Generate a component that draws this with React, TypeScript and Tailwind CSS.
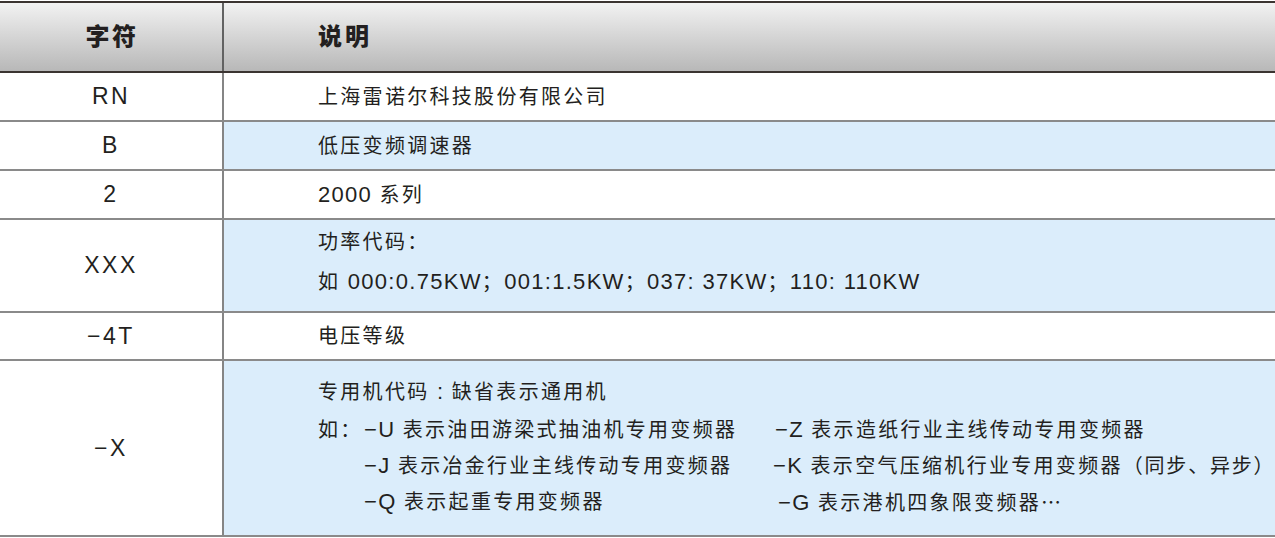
import React from "react";

const FONT = "font-['Liberation_Sans','Noto_Sans_CJK_SC',sans-serif]";

function L({ children }: { children: React.ReactNode }) {
  return <span className="text-[22px] tracking-[1.3px]">{children}</span>;
}

function Row({
  code,
  h,
  blue,
  children,
}: {
  code: string;
  h: string;
  blue?: boolean;
  children: React.ReactNode;
}) {
  return (
    <div className={`flex ${h} border-b-2 border-[#8a8a8a]`}>
      <div className="flex w-[224px] shrink-0 items-center justify-center border-r-2 border-[#858585] bg-white text-[23px] tracking-[2.5px] text-[#231f20]">
        {code}
      </div>
      <div
        className={`flex flex-1 flex-col justify-center pl-[94px] text-[20px] tracking-[2.3px] text-[#231f20] ${
          blue ? "bg-[#dbedfb]" : "bg-white"
        }`}
      >
        {children}
      </div>
    </div>
  );
}

export default function App() {
  return (
    <div className={`w-[1275px] h-[538px] overflow-hidden bg-white pt-[1px] ${FONT}`}>
      <div className="flex h-[72px] border-t-2 border-b-2 border-[#3b3431] bg-linear-to-b from-[#f2f2f2] to-[#b8b8b8]">
        <div className="flex w-[224px] shrink-0 items-center justify-center border-r-2 border-[#626262] pl-[2px] text-[24px] font-black tracking-[2.5px] text-[#231f20]">
          字符
        </div>
        <div className="flex flex-1 items-center pl-[94px] text-[24px] font-black tracking-[3px] text-[#231f20]">
          说明
        </div>
      </div>
      <Row code="RN" h="h-[49px]">
        <div>上海雷诺尔科技股份有限公司</div>
      </Row>
      <Row code="B" h="h-[49px]" blue>
        <div>低压变频调速器</div>
      </Row>
      <Row code="2" h="h-[49px]">
        <div>
          <L>2000 </L>系列
        </div>
      </Row>
      <Row code="XXX" h="h-[93px]" blue>
        <div className="pb-[8px] leading-[40px]">
          <div>功率代码：</div>
          <div className="whitespace-nowrap">
            如<L> 000:0.75KW</L>；<L>001:1.5KW</L>；<L>037: 37KW</L>；<L>110: 110KW</L>
          </div>
        </div>
      </Row>
      <Row code="−4T" h="h-[48px]">
        <div>电压等级</div>
      </Row>
      <Row code="−X" h="h-[176px]" blue>
        <div className="pb-[4px]">
          <div className="leading-[40px]">
            专用机代码<L> : </L>缺省表示通用机
          </div>
          <div className="flex leading-[36px]">
            <div className="w-[46px] shrink-0 whitespace-nowrap">如：</div>
            <div className="w-[411px] shrink-0">
              <div className="whitespace-nowrap">
                <L>−U </L>表示油田游梁式抽油机专用变频器
              </div>
              <div className="whitespace-nowrap">
                <L>−J </L>表示冶金行业主线传动专用变频器
              </div>
              <div className="whitespace-nowrap">
                <L>−Q </L>表示起重专用变频器
              </div>
            </div>
            <div>
              <div className="whitespace-nowrap">
                <L>−Z </L>表示造纸行业主线传动专用变频器
              </div>
              <div className="ml-[-2px] whitespace-nowrap">
                <L>−K </L>表示空气压缩机行业专用变频器
                <span className="tracking-[1.8px]">（同步、异步</span>
                <span className="tracking-normal">）</span>
              </div>
              <div className="ml-[3px] whitespace-nowrap">
                <L>−G </L>表示港机四象限变频器
                <span className="font-['Noto_Sans_CJK_SC',sans-serif] tracking-normal">…</span>
              </div>
            </div>
          </div>
        </div>
      </Row>
    </div>
  );
}
